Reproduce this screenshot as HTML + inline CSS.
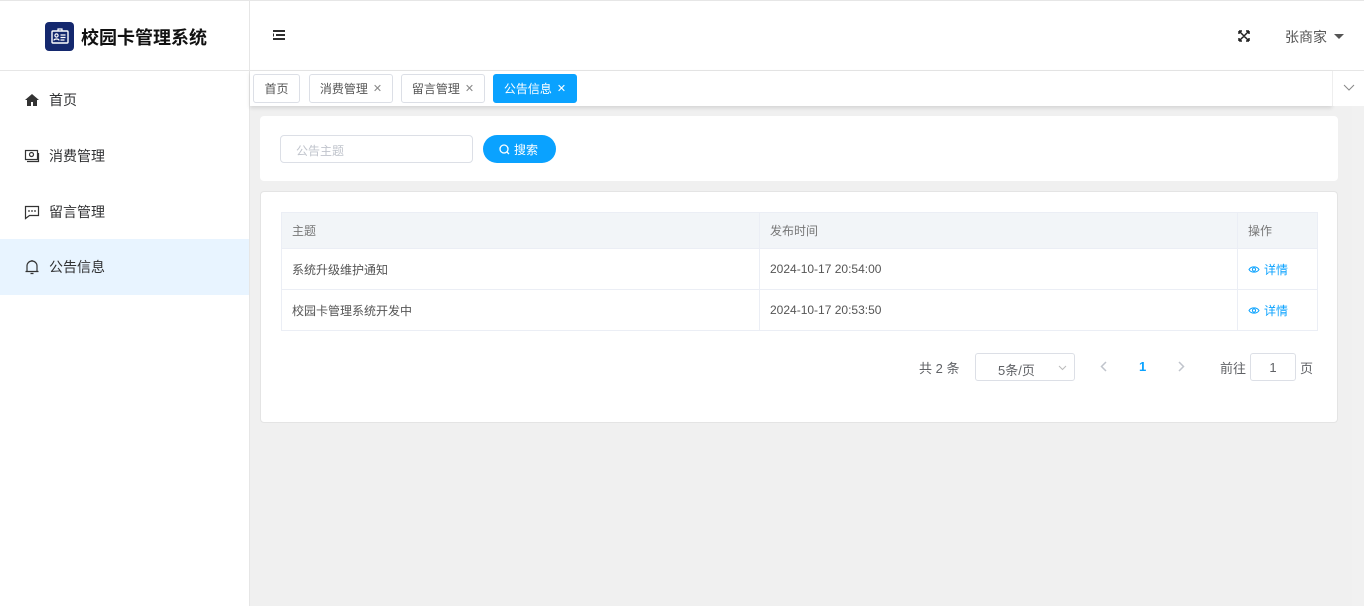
<!DOCTYPE html>
<html><head><meta charset="utf-8"><style>
*{margin:0;padding:0;box-sizing:border-box}
body{width:1364px;height:606px;overflow:hidden;font-family:"Liberation Sans","Noto Sans CJK SC",sans-serif;font-size:13px;color:#333;background:#fff;position:relative}
.abs{position:absolute}
.side{left:0;top:0;width:250px;height:606px;border-right:1px solid #e6e6e6;background:#fff}
.logo{left:0;top:0;width:249px;height:71px;border-bottom:1px solid #e6e6e6;border-top:1px solid #e6e6e6}
.menu{left:0;width:249px;height:56px;display:flex;align-items:center;padding-left:24px;font-size:14px;color:#303133}
.menu svg{margin-right:9px}
.top{left:250px;top:0;width:1114px;height:71px;border-bottom:1px solid #e6e6e6;border-top:1px solid #e6e6e6}
.tabs{left:250px;top:71px;width:1082px;height:35px;background:#fff;box-shadow:0 2px 4px rgba(0,0,0,.12)}
.tab{top:3px;height:29px;border:1px solid #dcdfe6;border-radius:3px;font-size:12px;color:#555;display:flex;align-items:center;justify-content:center;background:#fff}
.tab .x{margin-left:5px;font-size:11px;color:#888}
.main{left:250px;top:106px;width:1102px;height:500px;background:#f0f0f0}
.card{background:#fff;border-radius:4px}
td,th{border:1px solid #ebeef5;text-align:left;padding-left:10px;font-size:12px;font-weight:normal}
</style></head><body>
<div class="abs side"></div>
<div class="abs logo">
 <div class="abs" style="left:45px;top:21px;width:29px;height:29px;background:#14286e;border-radius:4px">
  <svg width="29" height="29" viewBox="0 0 29 29"><rect x="7" y="9" width="16" height="12" rx="1" fill="none" stroke="#fff" stroke-width="1.4"/><circle cx="11.5" cy="13.5" r="1.6" fill="none" stroke="#fff" stroke-width="1.2"/><path d="M9 18.5c0-2 5-2 5 0M15.5 13h5M15.5 15.5h5M15.5 18h4M13 9V7h4v2" stroke="#fff" stroke-width="1.2" fill="none"/></svg>
 </div>
 <div class="abs" style="left:81px;top:23px;font-size:18px;font-weight:bold;color:#111">校园卡管理系统</div>
</div>
<div class="abs menu" style="top:72px"><svg width="16" height="16" viewBox="0 0 16 16"><path d="M8 2L1 8h2v6h4v-4h2v4h4V8h2z" fill="#333"/></svg>首页</div>
<div class="abs menu" style="top:128px"><svg width="16" height="16" viewBox="0 0 16 16"><rect x="1.5" y="2.5" width="12" height="9" fill="none" stroke="#333" stroke-width="1.2"/><circle cx="7.5" cy="6.5" r="2" fill="none" stroke="#333" stroke-width="1.2"/><path d="M3 13.5h11.5V5" stroke="#333" stroke-width="1.2" fill="none"/></svg>消费管理</div>
<div class="abs menu" style="top:184px"><svg width="16" height="16" viewBox="0 0 16 16"><path d="M1.5 2.5h13v9h-9l-4 3z" fill="none" stroke="#333" stroke-width="1.2"/><circle cx="5" cy="7" r=".9" fill="#333"/><circle cx="8" cy="7" r=".9" fill="#333"/><circle cx="11" cy="7" r=".9" fill="#333"/></svg>留言管理</div>
<div class="abs menu" style="top:239px;background:#e8f4ff"><svg width="16" height="16" viewBox="0 0 16 16"><path d="M3 12.5V7a5 5 0 0 1 10 0v5.5M1.5 12.5h13M6.5 14.5h3M8 1v1" fill="none" stroke="#333" stroke-width="1.2"/></svg>公告信息</div>

<div class="abs top">
 <svg class="abs" style="left:23px;top:29px" width="12" height="11" viewBox="0 0 12 11"><path d="M0 1h12M3 5h9M0 9h12M0 3.5v3" stroke="#111" stroke-width="1.8"/></svg>
 <svg class="abs" style="left:988px;top:29px" width="12" height="12" viewBox="0 0 12 12"><path d="M1 1l10 10M11 1L1 11M1 1h3M1 1v3M11 1h-3M11 1v3M1 11h3M1 11v-3M11 11h-3M11 11v-3" stroke="#222" stroke-width="1.5"/></svg>
 <div class="abs" style="left:1035px;top:26px;font-size:14px;color:#555">张商家</div>
 <div class="abs" style="left:1084px;top:33px;border:5px solid transparent;border-top:5px solid #555;border-bottom:0"></div>
</div>

<div class="abs main"></div>
<div class="abs" style="left:1352px;top:106px;width:12px;height:500px;background:#f1f1f1"></div>
<div class="abs tabs">
 <div class="abs tab" style="left:3px;width:47px">首页</div>
 <div class="abs tab" style="left:59px;width:84px">消费管理<span class="x">✕</span></div>
 <div class="abs tab" style="left:151px;width:84px">留言管理<span class="x">✕</span></div>
 <div class="abs tab" style="left:243px;width:84px;background:#0aa2ff;border-color:#0aa2ff;color:#fff">公告信息<span class="x" style="color:#fff">✕</span></div>
</div>
<div class="abs" style="left:1332px;top:71px;width:32px;height:35px;background:#fff;border-left:1px solid #eee"><svg class="abs" style="left:10px;top:13px" width="12" height="8" viewBox="0 0 12 8"><path d="M1 1l5 5 5-5" stroke="#888" fill="none"/></svg></div>

<div class="abs card" style="left:260px;top:116px;width:1078px;height:65px">
 <div class="abs" style="left:20px;top:19px;width:193px;height:28px;border:1px solid #dcdfe6;border-radius:4px;color:#c0c4cc;font-size:12px;padding:6px 0 0 15px">公告主题</div>
 <div class="abs" style="left:223px;top:19px;width:73px;height:28px;background:#0aa2ff;border-radius:14px;color:#fff;font-size:12px;padding:6px 0 0 16px"><svg width="11" height="11" viewBox="0 0 11 11" style="vertical-align:-1px;margin-right:4px"><circle cx="5" cy="5" r="4" fill="none" stroke="#fff" stroke-width="1.3"/><path d="M8 8l2 2" stroke="#fff" stroke-width="1.3"/></svg>搜索</div>
</div>

<div class="abs card" style="left:260px;top:191px;width:1078px;height:232px;border:1px solid #e4e4e4">
 <table class="abs" style="left:20px;top:20px;width:1037px;border-collapse:collapse">
  <tr style="height:36px;background:#f2f5f8;color:#777"><th style="width:478px">主题</th><th style="width:478px">发布时间</th><th>操作</th></tr>
  <tr style="height:41px;color:#555"><td>系统升级维护通知</td><td>2024-10-17 20:54:00</td><td style="color:#0aa2ff"><svg width="12" height="9" viewBox="0 0 12 9" style="margin-right:4px"><path d="M1 4.5C3 1 9 1 11 4.5 9 8 3 8 1 4.5z" fill="none" stroke="#0aa2ff"/><circle cx="6" cy="4.5" r="1.6" fill="none" stroke="#0aa2ff"/></svg>详情</td></tr>
  <tr style="height:41px;color:#555"><td>校园卡管理系统开发中</td><td>2024-10-17 20:53:50</td><td style="color:#0aa2ff"><svg width="12" height="9" viewBox="0 0 12 9" style="margin-right:4px"><path d="M1 4.5C3 1 9 1 11 4.5 9 8 3 8 1 4.5z" fill="none" stroke="#0aa2ff"/><circle cx="6" cy="4.5" r="1.6" fill="none" stroke="#0aa2ff"/></svg>详情</td></tr>
 </table>
 <div class="abs" style="left:658px;top:166px;color:#606266">共 2 条</div>
 <div class="abs" style="left:714px;top:161px;width:100px;height:28px;border:1px solid #dcdfe6;border-radius:3px;color:#606266;padding:6px 0 0 22px">5条/页<svg class="abs" style="left:82px;top:11px" width="9" height="6" viewBox="0 0 9 6"><path d="M1 1l3.5 3.5L8 1" stroke="#bbb" fill="none"/></svg></div>
 <svg class="abs" style="left:839px;top:169px" width="7" height="11" viewBox="0 0 7 11"><path d="M6 1L1.5 5.5 6 10" stroke="#c0c4cc" stroke-width="1.5" fill="none"/></svg>
 <div class="abs" style="left:878px;top:167px;color:#0aa2ff;font-weight:bold">1</div>
 <svg class="abs" style="left:917px;top:169px" width="7" height="11" viewBox="0 0 7 11"><path d="M1 1l4.5 4.5L1 10" stroke="#c0c4cc" stroke-width="1.5" fill="none"/></svg>
 <div class="abs" style="left:959px;top:166px;color:#606266">前往</div>
 <div class="abs" style="left:989px;top:161px;width:46px;height:28px;border:1px solid #dcdfe6;border-radius:3px;text-align:center;padding-top:6px;color:#606266">1</div>
 <div class="abs" style="left:1039px;top:166px;color:#606266">页</div>
</div>
</body></html>
